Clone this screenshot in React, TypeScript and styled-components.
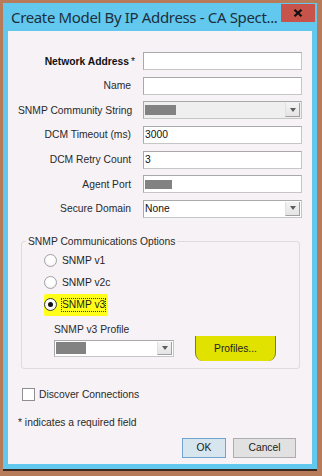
import React from "react";
import styled, { createGlobalStyle } from "styled-components";

const Global = createGlobalStyle`
  html, body { margin: 0; padding: 0; background: #b77b59; }
  body { width: 322px; height: 476px; overflow: hidden; }
  * { box-sizing: border-box; }
`;

const Window = styled.div`
  margin: 3px 5px 0 3px;
  width: 314px;
  height: 468px;
  background: #62c8ee;
  padding: 0 5px 5px 5px;
  display: flex;
  flex-direction: column;
  border-bottom: 2px solid #3a2a22;
`;

const TitleBar = styled.div`
  height: 28px;
  display: flex;
  align-items: flex-start;
  justify-content: space-between;
  margin-right: -3px;
`;

const Title = styled.div`
  font-family: "Noto Sans", "Open Sans", sans-serif;
  font-size: 15px;
  color: #1d2f3c;
  padding: 5px 0 0 3px;
  line-height: 18px;
  white-space: nowrap;
  letter-spacing: -0.35px;
`;

const CloseButton = styled.div`
  margin-top: 1px;
  width: 34px;
  height: 18px;
  background: #c7534b;
  display: flex;
  align-items: center;
  justify-content: center;
`;

const Content = styled.div`
  flex: 1;
  background: #f6f2f6;
  padding: 21px 16px 0 10px;
  display: flex;
  flex-direction: column;
  font-family: "Liberation Sans", Arial, sans-serif;
  font-size: 10.3px;
  color: #1e1e1e;
`;

const FormGrid = styled.div`
  display: grid;
  grid-template-columns: 113px 159px;
  column-gap: 12px;
  row-gap: 6.67px;
  grid-auto-rows: 18px;
`;

const Label = styled.label<{ $bold?: boolean }>`
  text-align: right;
  align-self: center;
  white-space: nowrap;
  font-weight: ${(p) => (p.$bold ? "bold" : "normal")};
  color: ${(p) => (p.$bold ? "#111" : "#2a2a2a")};
`;

const Star = styled.span`
  display: inline-block;
  width: 0;
  overflow: visible;
  font-weight: normal;
  margin-left: 2px;
`;

const TextBox = styled.div<{ $disabled?: boolean }>`
  height: 18px;
  background: ${(p) => (p.$disabled ? "#efefef" : "#ffffff")};
  border: 1px solid #c6c6c6;
  border-top-color: #a9a9a9;
  border-left-color: #a9a9a9;
  display: flex;
  align-items: center;
  padding-left: 1px;
  position: relative;
`;

const Value = styled.span`
  color: #111;
`;

const Redacted = styled.span<{ $w: number; $h: number }>`
  display: inline-block;
  width: ${(p) => p.$w}px;
  height: ${(p) => p.$h}px;
  background: #828282;
`;

const ArrowButton = styled.div`
  position: absolute;
  right: 1px;
  top: 1px;
  bottom: 1px;
  width: 15px;
  background: linear-gradient(#f4f4f4, #e4e4e4);
  border-left: 1px solid #e0e0e0;
  border-right: 1px solid #a0a0a0;
  border-bottom: 1px solid #a0a0a0;
  display: flex;
  align-items: center;
  justify-content: center;
`;

const Arrow = styled.span`
  width: 0;
  height: 0;
  border-left: 3.5px solid transparent;
  border-right: 3.5px solid transparent;
  border-top: 4px solid #5e5e5e;
`;

const Group = styled.fieldset`
  margin: 18px 0 0 3px;
  width: 279px;
  padding: 0 0 7px 0;
  border: 1px solid #dcdcdc;
  border-radius: 3px;
  min-width: 0;
`;

const Legend = styled.legend`
  padding: 0 2px;
  margin-left: 4px;
  line-height: 12px;
  color: #2a2a2a;
`;

const RadioList = styled.div`
  display: flex;
  flex-direction: column;
  padding: 2px 0 0 22px;
`;

const RadioRow = styled.div<{ $highlight?: boolean }>`
  height: 22px;
  display: flex;
  align-items: center;
  align-self: flex-start;
  gap: 5px;
  padding-right: ${(p) => (p.$highlight ? "3px" : "0")};
  background: ${(p) => (p.$highlight ? "#ffff1a" : "transparent")};
  border-radius: 2px;
`;

const RadioCircle = styled.span<{ $checked?: boolean }>`
  width: 13px;
  height: 13px;
  border-radius: 50%;
  border: 1px solid ${(p) => (p.$checked ? "#3c3c3c" : "#a3a3a3")};
  background: radial-gradient(circle at 50% 40%, #ffffff 40%, #e8e8e8 100%);
  display: flex;
  align-items: center;
  justify-content: center;
  &::after {
    content: "";
    width: 5px;
    height: 5px;
    border-radius: 50%;
    background: ${(p) => (p.$checked ? "#111" : "transparent")};
  }
`;

const RadioText = styled.span<{ $focus?: boolean }>`
  line-height: 12px;
  outline: ${(p) => (p.$focus ? "1px dotted #333" : "none")};
  outline-offset: 0px;
`;

const ProfileGrid = styled.div`
  display: grid;
  grid-template-columns: 120px 81px;
  grid-template-rows: 12px 25px;
  column-gap: 21px;
  margin: 8px 0 0 32px;
`;

const ProfileLabel = styled.div`
  line-height: 12px;
  white-space: nowrap;
  color: #2a2a2a;
`;

const ProfileSelect = styled(TextBox)`
  grid-row: 2;
  align-self: center;
  height: 17px;
`;

const ProfilesButton = styled.div`
  grid-row: 2;
  grid-column: 2;
  height: 25px;
  background: #e2e200;
  border-left: 1px solid #7c7c20;
  border-right: 1px solid #7c7c20;
  border-radius: 0 0 8px 8px;
  display: flex;
  align-items: center;
  justify-content: center;
  color: #222;
`;

const CheckRow = styled.div`
  margin: 19px 0 0 4px;
  height: 13px;
  display: flex;
  align-items: center;
  gap: 4px;
  color: #2a2a2a;
`;

const CheckBox = styled.span`
  width: 13px;
  height: 13px;
  background: #fff;
  border: 1px solid #8f8f8f;
`;

const Note = styled.div`
  margin-top: 16px;
  line-height: 12px;
  color: #2a2a2a;
`;

const ButtonRow = styled.div`
  display: flex;
  justify-content: flex-end;
  gap: 7px;
  margin-top: 9px;
`;

const DialogButton = styled.div<{ $default?: boolean; $w: number }>`
  width: ${(p) => p.$w}px;
  height: 20px;
  background: ${(p) => (p.$default ? "#d6e5ee" : "#e1e1e1")};
  border: 1px solid ${(p) => (p.$default ? "#6fa3cf" : "#adadad")};
  display: flex;
  align-items: center;
  justify-content: center;
  color: #222;
`;

export default function App() {
  return (
    <>
      <Global />
      <Window>
        <TitleBar>
          <Title>Create Model By IP Address - CA Spect...</Title>
          <CloseButton>
            <svg width="10" height="8" viewBox="0 0 10 8">
              <path d="M1.5 0.8 L8.5 7.2 M8.5 0.8 L1.5 7.2" stroke="#111" strokeWidth="2.2" />
            </svg>
          </CloseButton>
        </TitleBar>
        <Content>
          <FormGrid>
            <Label $bold>
              Network Address<Star>*</Star>
            </Label>
            <TextBox />
            <Label>Name</Label>
            <TextBox />
            <Label>SNMP Community String</Label>
            <TextBox $disabled>
              <Redacted $w={31} $h={10} />
              <ArrowButton>
                <Arrow />
              </ArrowButton>
            </TextBox>
            <Label>DCM Timeout (ms)</Label>
            <TextBox>
              <Value>3000</Value>
            </TextBox>
            <Label>DCM Retry Count</Label>
            <TextBox>
              <Value>3</Value>
            </TextBox>
            <Label>Agent Port</Label>
            <TextBox>
              <Redacted $w={27} $h={9} />
            </TextBox>
            <Label>Secure Domain</Label>
            <TextBox>
              <Value>None</Value>
              <ArrowButton>
                <Arrow />
              </ArrowButton>
            </TextBox>
          </FormGrid>

          <Group>
            <Legend>SNMP Communications Options</Legend>
            <RadioList>
              <RadioRow>
                <RadioCircle />
                <RadioText>SNMP v1</RadioText>
              </RadioRow>
              <RadioRow>
                <RadioCircle />
                <RadioText>SNMP v2c</RadioText>
              </RadioRow>
              <RadioRow $highlight>
                <RadioCircle $checked />
                <RadioText $focus>SNMP v3</RadioText>
              </RadioRow>
            </RadioList>
            <ProfileGrid>
              <ProfileLabel>SNMP v3 Profile</ProfileLabel>
              <ProfileSelect>
                <Redacted $w={30} $h={12} />
                <ArrowButton>
                  <Arrow />
                </ArrowButton>
              </ProfileSelect>
              <ProfilesButton>Profiles...</ProfilesButton>
            </ProfileGrid>
          </Group>

          <CheckRow>
            <CheckBox />
            <span>Discover Connections</span>
          </CheckRow>
          <Note>* indicates a required field</Note>
          <ButtonRow>
            <DialogButton $default $w={44}>
              OK
            </DialogButton>
            <DialogButton $w={63}>Cancel</DialogButton>
          </ButtonRow>
        </Content>
      </Window>
    </>
  );
}
